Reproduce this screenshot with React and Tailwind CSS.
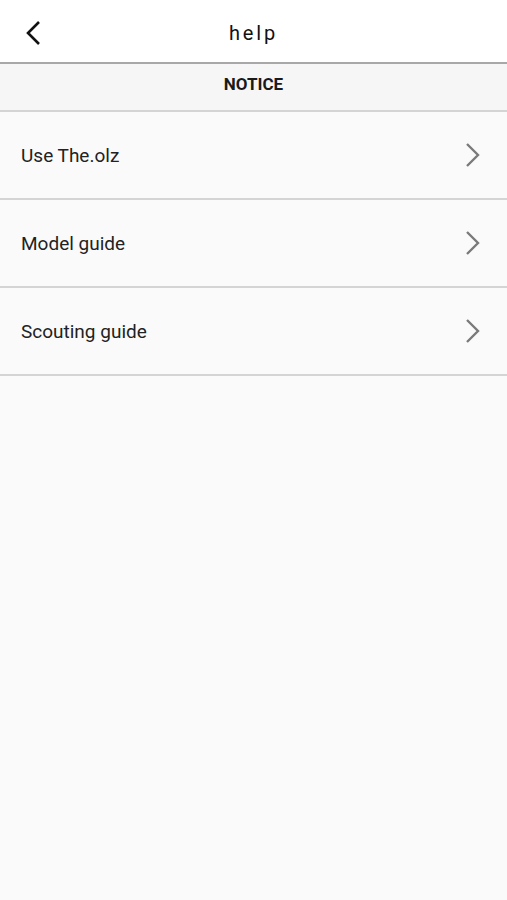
import React from 'react';

const items = ['Use The.olz', 'Model guide', 'Scouting guide'];

function Chevron() {
  return (
    <svg width="16" height="26" viewBox="0 0 16 26" fill="none">
      <path d="M2 2 L13 13 L2 24" stroke="#7a7a7a" strokeWidth="2.4" />
    </svg>
  );
}

export default function App() {
  return (
    <div className="min-h-[900px] bg-[#fafafa]" style={{ fontFamily: 'Roboto, "Noto Sans", sans-serif' }}>
      <div className="relative h-[64px] bg-white flex items-center justify-center border-b-[2px] border-[#a8a8a8]">
        <button className="absolute left-[24px] top-[20px]">
          <svg width="20" height="26" viewBox="0 0 20 26" fill="none">
            <path d="M15 2 L4 13 L15 24" stroke="#111" strokeWidth="2.6" />
          </svg>
        </button>
        <h1 className="text-[20px] tracking-[0.14em] text-[#111] pt-[3px]">help</h1>
      </div>
      <div className="h-[48px] bg-[#f6f6f6] flex items-center justify-center border-b-[2px] border-[#d4d4d4] pb-[5px]">
        <span className="text-[17px] font-bold text-[#1a1a1a]">NOTICE</span>
      </div>
      {items.map((item) => (
        <div
          key={item}
          className="h-[88px] flex items-center justify-between pl-[21px] pr-[26px] border-b-[2px] border-[#d4d4d4] bg-[#fafafa]"
        >
          <span className="text-[19px] text-[#222] pt-[2px]">{item}</span>
          <Chevron />
        </div>
      ))}
    </div>
  );
}
